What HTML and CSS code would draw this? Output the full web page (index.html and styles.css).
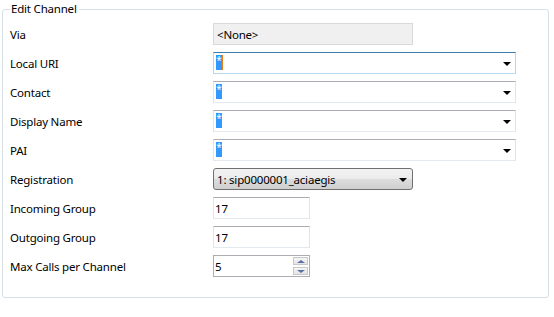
FILE: index.html
```html
<!DOCTYPE html>
<html>
<head>
<meta charset="utf-8">
<link rel="stylesheet" href="styles.css">
</head>
<body>
<fieldset class="group">
  <legend class="group-title">Edit Channel</legend>
  <div class="form">
    <div class="label">Via</div>
    <div class="field"><div class="readonly">&lt;None&gt;</div></div>

    <div class="label">Local URI</div>
    <div class="field"><div class="combo focused"><span class="sel">*</span><span class="caret"></span><span class="arrow"></span></div></div>

    <div class="label">Contact</div>
    <div class="field"><div class="combo"><span class="sel">*</span><span class="arrow"></span></div></div>

    <div class="label">Display Name</div>
    <div class="field"><div class="combo"><span class="sel">*</span><span class="arrow"></span></div></div>

    <div class="label">PAI</div>
    <div class="field"><div class="combo"><span class="sel">*</span><span class="arrow"></span></div></div>

    <div class="label">Registration</div>
    <div class="field"><div class="dropdown"><span>1: sip0000001_aciaegis</span><span class="arrow"></span></div></div>

    <div class="label">Incoming Group</div>
    <div class="field"><div class="textbox">17</div></div>

    <div class="label">Outgoing Group</div>
    <div class="field"><div class="textbox">17</div></div>

    <div class="label">Max Calls per Channel</div>
    <div class="field"><div class="textbox spin"><span>5</span>
      <span class="spin-btns"><span class="spin-btn"><span class="up"></span></span><span class="spin-btn"><span class="down"></span></span></span>
    </div></div>
  </div>
</fieldset>
</body>
</html>
```

FILE: styles.css
```css
html, body {
  margin: 0;
  padding: 0;
  background: #ffffff;
}
body {
  font-family: "Noto Sans", "Open Sans", sans-serif;
  font-size: 11.5px;
  letter-spacing: -0.2px;
  color: #000;
}
.group {
  box-sizing: border-box;
  margin: 0 0 0 2px;
  width: 547px;
  height: 298px;
  padding: 0 7px 0 7px;
  border: 1px solid #d5dfe5;
  border-radius: 3px;
}
.group-title {
  padding: 0 2px 0 1px;
  margin-left: 0;
  line-height: 18px;
  height: 18px;
}
.form {
  display: grid;
  grid-template-columns: 203px 1fr;
  grid-auto-rows: 22px;
  row-gap: 7px;
  padding-top: 5px;
}
.label {
  display: flex;
  align-items: center;
  white-space: nowrap;
}
.field {
  display: flex;
  align-items: stretch;
}
.readonly {
  box-sizing: border-box;
  width: 200px;
  background: #f0f0f0;
  border: 1px solid #d9d9d9;
  padding-left: 3px;
  display: flex;
  align-items: center;
}
.combo {
  position: relative;
  box-sizing: border-box;
  width: 303px;
  border: 1px solid #e2e3ea;
  border-top-color: #abadb3;
  border-bottom-color: #e3e9ef;
  background: #fff;
}
.combo.focused {
  border-color: #b5d5ec;
  border-top-color: #3d7bad;
  border-bottom-color: #b7d9ed;
}
.sel {
  position: absolute;
  left: 2px;
  top: 2px;
  width: 6px;
  height: 15px;
  background: #3399ff;
  color: #fff;
  font-size: 10px;
  line-height: 10px;
  text-align: center;
}
.caret {
  position: absolute;
  left: 8px;
  top: 2px;
  width: 1px;
  height: 15px;
  background: #f07b12;
}
.arrow {
  position: absolute;
  right: 4px;
  top: 9px;
  width: 0;
  height: 0;
  border-left: 4px solid transparent;
  border-right: 4px solid transparent;
  border-top: 4px solid #000;
}
.dropdown {
  position: relative;
  box-sizing: border-box;
  width: 200px;
  border: 1px solid #707070;
  border-radius: 3px;
  background: linear-gradient(#f2f2f2 0%, #ebebeb 50%, #dddddd 50%, #cfcfcf 100%);
  padding-left: 3px;
  display: flex;
  align-items: center;
}
.dropdown .arrow {
  right: 5px;
}
.textbox {
  position: relative;
  box-sizing: border-box;
  width: 97px;
  border: 1px solid #e2e3ea;
  border-top-color: #abadb3;
  border-bottom-color: #e3e9ef;
  padding-left: 1px;
  display: flex;
  align-items: center;
}
.textbox.spin {
  border: 1px solid #abadb3;
}
.spin-btns {
  position: absolute;
  right: 1px;
  top: 1px;
  display: flex;
  flex-direction: column;
  gap: 2px;
}
.spin-btn {
  box-sizing: border-box;
  width: 15px;
  height: 8px;
  border: 1px solid #c8c8c8;
  background: linear-gradient(#f6f6f6, #e4e4e4);
  display: flex;
  align-items: center;
  justify-content: center;
}
.up {
  width: 0;
  height: 0;
  border-left: 4px solid transparent;
  border-right: 4px solid transparent;
  border-bottom: 3px solid #5a6fa6;
}
.down {
  width: 0;
  height: 0;
  border-left: 4px solid transparent;
  border-right: 4px solid transparent;
  border-top: 3px solid #5a6fa6;
}
```
